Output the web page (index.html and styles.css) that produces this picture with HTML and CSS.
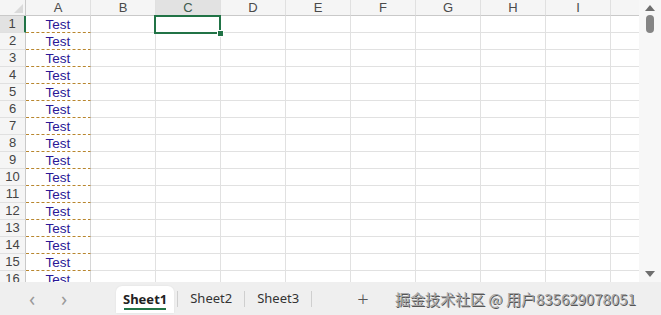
FILE: index.html
```html
<!DOCTYPE html>
<html lang="zh">
<head>
  <meta charset="UTF-8">
  <meta name="viewport" content="width=device-width, initial-scale=1.0">
  <title>Sheet</title>
  <link rel="stylesheet" href="styles.css">
</head>
<body>
  <div class="app">
    <div class="main">
      <div class="sheet-wrap">
        <div class="sheet" id="sheet"></div>
        <div class="selection"><span class="handle"></span></div>
      </div>
      <div class="vscroll">
        <span class="arrow-up"></span>
        <span class="thumb"></span>
        <span class="spacer"></span>
        <span class="arrow-down"></span>
      </div>
    </div>

    <div class="tabbar">
      <div class="nav">
        <span class="nav-btn">&#8249;</span>
        <span class="nav-btn">&#8250;</span>
      </div>
      <div class="tabs">
        <div class="tab active">Sheet1</div>
        <span class="sep"></span>
        <div class="tab">Sheet2</div>
        <span class="sep"></span>
        <div class="tab">Sheet3</div>
        <span class="sep"></span>
        <div class="add">+</div>
      </div>
      <div class="watermark">掘金技术社区 @ 用户835629078051</div>
    </div>
  </div>

  <script>
    const sheet = document.getElementById('sheet');
    const cols = ['A', 'B', 'C', 'D', 'E', 'F', 'G', 'H', 'I', ''];
    let html = '<div class="corner"></div>';

    // En-têtes de colonnes
    cols.forEach((c, i) => {
      html += `<div class="col-head${i === 2 ? ' current' : ''}">${c}</div>`;
    });

    // Lignes
    for (let r = 1; r <= 16; r++) {
      html += `<div class="row-head${r === 1 ? ' current' : ''}">${r}</div>`;
      cols.forEach((c, i) => {
        if (i === 0) {
          html += '<div class="cell test">Test</div>';
        } else {
          html += '<div class="cell"></div>';
        }
      });
    }
    sheet.innerHTML = html;
  </script>
</body>
</html>
```

FILE: styles.css
```css
/* Styles globaux */
body {
  margin: 0;
  padding: 0;
  font-family: "Noto Sans", "Liberation Sans", sans-serif;
  background-color: #fff;
  color: #333;
  overflow: hidden;
}

.app {
  width: 661px;
  height: 315px;
  display: flex;
  flex-direction: column;
}

.main {
  display: flex;
  height: 282px;
}

.sheet-wrap {
  position: relative;
  width: 639px;
  height: 282px;
  overflow: hidden;
}

.sheet {
  display: grid;
  grid-template-columns: 26px repeat(10, 65px);
  grid-template-rows: 16px;
  grid-auto-rows: 17px;
}

.corner {
  background: #f5f5f5;
  border-right: 1px solid #c9c9c9;
  border-bottom: 1px solid #c9c9c9;
  position: relative;
}

.corner::after {
  content: "";
  position: absolute;
  right: 2px;
  bottom: 2px;
  border-left: 9px solid transparent;
  border-bottom: 9px solid #dadada;
}

.col-head {
  background: #f5f5f5;
  border-right: 1px solid #e0e0e0;
  border-bottom: 1px solid #c9c9c9;
  font-family: "Liberation Sans", Arial, sans-serif;
  font-size: 13px;
  line-height: 15px;
  text-align: center;
  color: #4a4a4a;
}

.col-head.current {
  background: #e2e2e2;
  color: #3d5a4c;
  border-bottom-color: #217346;
}

.row-head {
  background: #f5f5f5;
  border-right: 1px solid #c9c9c9;
  border-bottom: 1px solid #e0e0e0;
  font-family: "Liberation Sans", Arial, sans-serif;
  font-size: 13px;
  line-height: 16px;
  text-align: center;
  color: #444;
}

.row-head.current {
  background: #e2e2e2;
  border-right: 2px solid #217346;
}

.cell {
  border-right: 1px solid #e1e1e1;
  border-bottom: 1px solid #e1e1e1;
}

.cell.test {
  border-right-color: #d6d6d6;
  border-bottom: 1px dashed #b8862e;
  font-family: "Liberation Sans", Arial, sans-serif;
  font-size: 13.5px;
  line-height: 17px;
  text-align: center;
  color: #2a1896;
}

.selection {
  position: absolute;
  left: 154px;
  top: 15px;
  width: 63px;
  height: 15px;
  border: 2px solid #217346;
}

.handle {
  position: absolute;
  right: -5px;
  bottom: -5px;
  width: 5px;
  height: 5px;
  background: #217346;
  border: 1px solid #fff;
}

/* Barre de défilement */
.vscroll {
  width: 22px;
  background: #f7f7f7;
  display: flex;
  flex-direction: column;
  align-items: center;
}

.arrow-up {
  margin-top: 5px;
  border-left: 5px solid transparent;
  border-right: 5px solid transparent;
  border-bottom: 6px solid #6f6f6f;
}

.thumb {
  margin-top: 4px;
  width: 8px;
  height: 18px;
  border-radius: 4px;
  background: #858585;
}

.spacer {
  flex: 1;
}

.arrow-down {
  margin-bottom: 5px;
  border-left: 5px solid transparent;
  border-right: 5px solid transparent;
  border-top: 6px solid #6f6f6f;
}

/* Onglets */
.tabbar {
  position: relative;
  height: 33px;
  background: #efefef;
  display: flex;
  align-items: center;
}

.nav {
  display: flex;
  gap: 20px;
  margin-left: 26px;
  width: 90px;
}

.nav-btn {
  font-size: 20px;
  line-height: 20px;
  color: #9a9a9a;
  width: 12px;
  text-align: center;
}

.tabs {
  display: flex;
  align-items: center;
  font-size: 13px;
  color: #333;
}

.tab {
  padding: 0 12px;
  height: 27px;
  line-height: 27px;
}

.tab.active {
  margin-top: 2px;
  margin-right: 3px;
  padding: 0 7px;
  align-self: flex-start;
  background: #fff;
  border-radius: 6px 6px 0 0;
  font-weight: 700;
  color: #222;
  position: relative;
  box-shadow: 0 0 2px rgba(0, 0, 0, 0.08);
}

.tab.active::after {
  content: "";
  position: absolute;
  left: 8px;
  right: 8px;
  bottom: 3px;
  height: 2px;
  background: #217346;
}

.sep {
  width: 1px;
  height: 16px;
  background: #cfcfcf;
}

.add {
  margin-left: 45px;
  font-size: 20px;
  font-weight: 300;
  color: #555;
}

.watermark {
  position: absolute;
  left: 395px;
  top: 8px;
  font-family: "Noto Sans CJK SC", "Noto Sans", sans-serif;
  font-size: 15px;
  line-height: 18px;
  color: #a8a8a8;
  text-shadow: 1px 1px 0 #555;
  white-space: nowrap;
}
```
